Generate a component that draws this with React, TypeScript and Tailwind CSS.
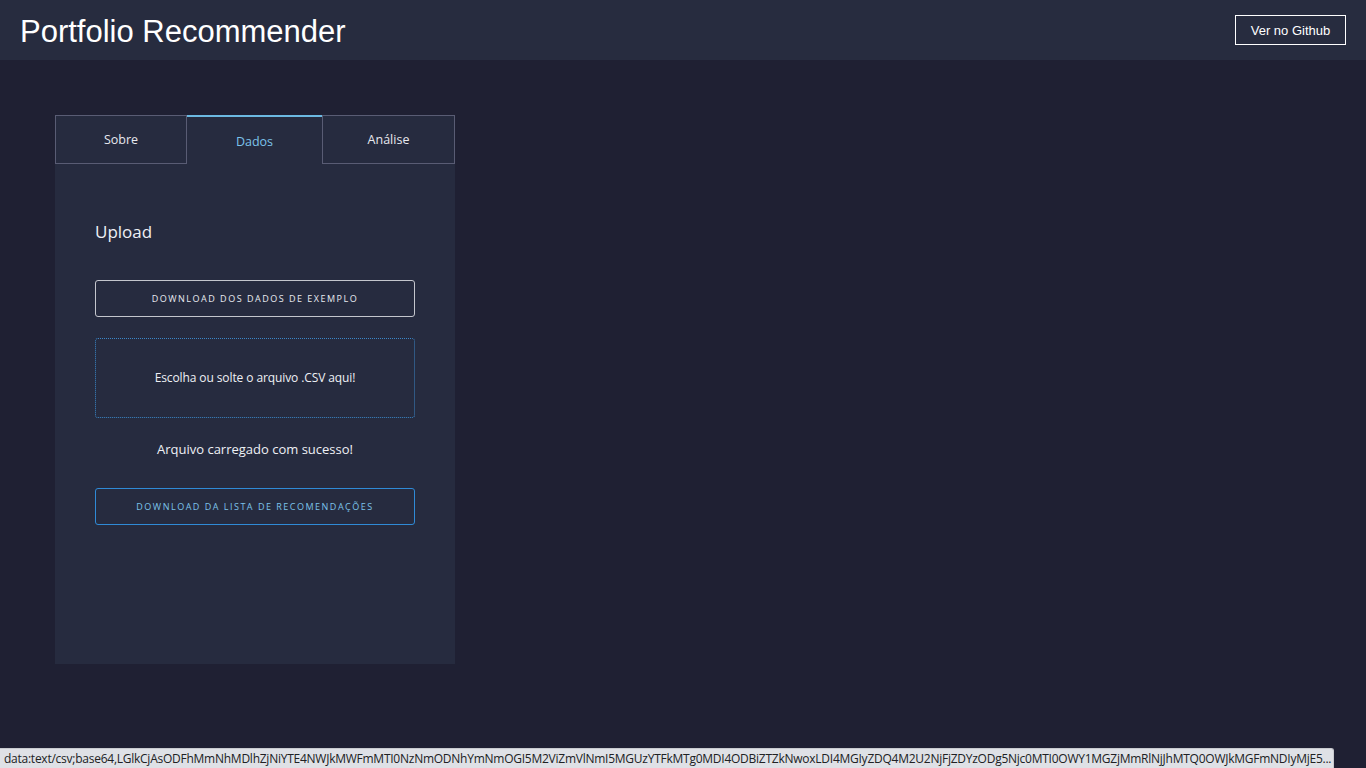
import React from "react";

export default function App() {
  const panelFont = { fontFamily: '"Open Sans", "Noto Sans", sans-serif' };
  return (
    <div className="min-h-[768px] w-full bg-[#1f2033] flex flex-col">
      <header className="h-[60px] bg-[#272c3f] flex items-center justify-between pl-5 pr-5">
        <h1 className="text-[31px] leading-none text-white font-['Liberation_Sans',Arial,sans-serif] pt-[2px]">
          Portfolio Recommender
        </h1>
        <button className="h-[30px] w-[111px] border border-white text-white text-[13px] font-['Liberation_Sans',Arial,sans-serif] flex items-center justify-center pt-[1px]">
          Ver no Github
        </button>
      </header>

      <main className="pt-[55px] pl-[55px]">
        <div className="w-[400px] flex flex-col" style={panelFont}>
          <div className="flex h-[49px]">
            <div className="w-[132px] border border-[#595c74] bg-[#262b3f] flex items-center justify-center text-[12.5px] text-[#e6e8ee] pt-[2px]">
              Sobre
            </div>
            <div className="w-[135px] border-t-2 border-[#6cb9e2] bg-[#262b3f] flex items-center justify-center text-[12.5px] text-[#7cc3ea] pt-[3px]">
              Dados
            </div>
            <div className="w-[133px] border border-[#595c74] bg-[#262b3f] flex items-center justify-center text-[12.5px] text-[#e6e8ee] pt-[2px]">
              Análise
            </div>
          </div>
          <div className="h-[500px] bg-[#262b3f] px-10 pt-[57px] flex flex-col">
            <div className="text-[17px] leading-[22px] text-[#eef0f5]">Upload</div>
            <button className="mt-[37px] h-[37px] w-full rounded-[3px] border border-[#c4c6cd] text-[9px] tracking-[1.5px] text-[#e8eaf0] uppercase flex items-center justify-center">
              Download dos dados de exemplo
            </button>
            <div className="mt-[21px] h-[80px] w-full rounded-[3px] border border-dotted border-[#3a86c8] flex items-center justify-center text-[12px] tracking-[-0.1px] text-[#eef0f5]">
              Escolha ou solte o arquivo .CSV aqui!
            </div>
            <div className="mt-[21px] h-[20px] leading-[20px] text-center text-[13px] text-[#eef0f5]">
              Arquivo carregado com sucesso!
            </div>
            <button className="mt-[29px] h-[37px] w-full rounded-[3px] border border-[#2f8ad6] text-[9px] tracking-[1.5px] text-[#7cc3ea] uppercase flex items-center justify-center">
              Download da lista de recomendações
            </button>
          </div>
        </div>
      </main>

      <div className="fixed bottom-0 left-0 h-[20px] w-[1334px] bg-[#dfe1e6] rounded-tr-[3px] border-t border-r border-[#c8cacf] flex items-center px-[4px] overflow-hidden">
        <span className="text-[12px] leading-none text-[#202124] whitespace-nowrap font-['Open_Sans','Noto_Sans',sans-serif] tracking-[-0.25px]">
          data:text/csv;base64,LGlkCjAsODFhMmNhMDlhZjNiYTE4NWJkMWFmMTI0NzNmODNhYmNmOGI5M2ViZmVlNmI5MGUzYTFkMTg0MDI4ODBiZTZkNwoxLDI4MGIyZDQ4M2U2NjFjZDYzODg5Njc0MTI0OWY1MGZjMmRlNjJhMTQ0OWJkMGFmNDIyMjE5...
        </span>
      </div>
    </div>
  );
}
